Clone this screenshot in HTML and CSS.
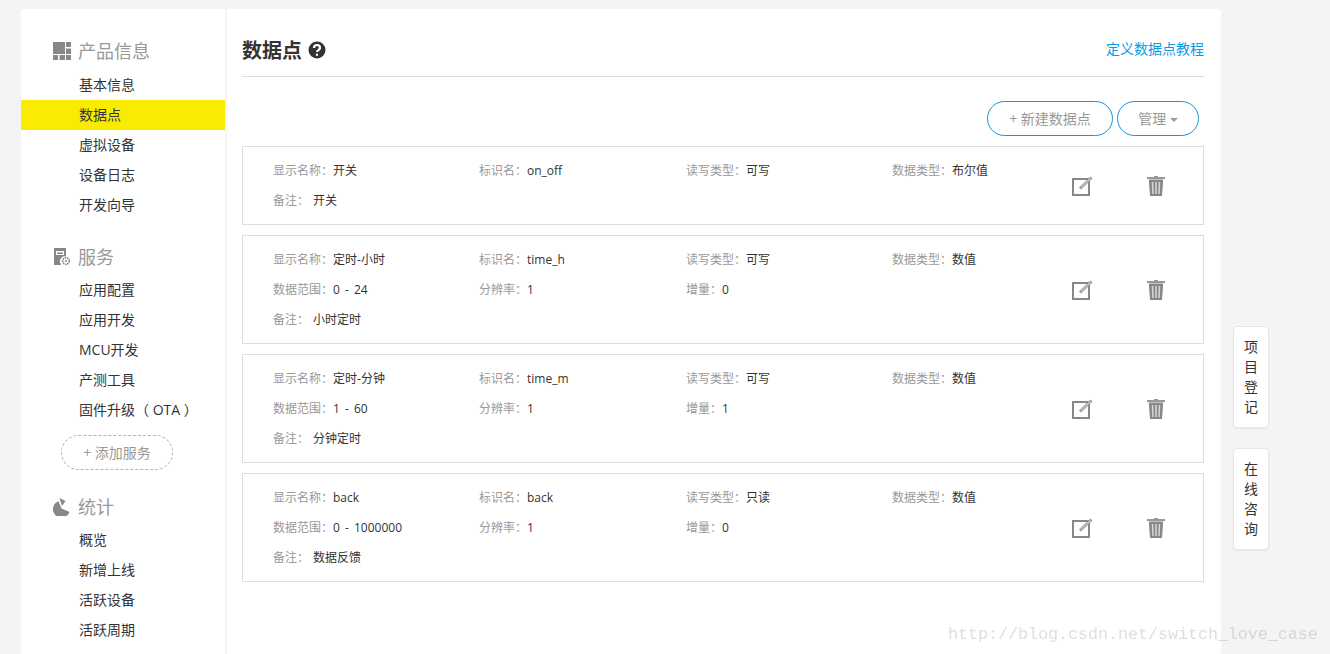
FILE: index.html
```html
<!DOCTYPE html>
<html lang="zh-CN">
<head>
<meta charset="utf-8">
<title>数据点</title>
<link rel="stylesheet" href="styles.css">
</head>
<body>
<svg class="sprites" aria-hidden="true">
  <symbol id="i-edit" viewBox="0 0 21 21">
    <rect class="edit-box" x="1" y="3" width="16" height="16"/>
    <path class="edit-pen" d="M8 12.500 19.500 1.500"/>
    <path class="edit-pen-core" d="M9 11.500 18.500 2.500"/>
  </symbol>
  <symbol id="i-trash" viewBox="0 0 18 20">
    <path class="trash-lid" d="M7 0h4v1h7v2H0V1h7z"/>
    <path class="trash-body" d="M1.800 3.500h14.400L15 20H3z"/>
    <path class="trash-lines" d="M5.500 6l.5 12M9 6v12M12.500 6l-.5 12"/>
  </symbol>
</svg>
<div class="panel">
  <aside class="sidebar">
    <h3 class="nav-title nav-title-first">
      <svg class="nav-icon" viewBox="0 0 18 18"><path d="M0 0h12v12H0zM13 0h5v5h-5zM13 6.500h5V12h-5zM0 13h5v5H0zM6.500 13H12v5H6.500zM13 13h5v5h-5z"/></svg>
      产品信息
    </h3>
    <ul class="nav-list">
      <li>基本信息</li>
      <li class="active">数据点</li>
      <li>虚拟设备</li>
      <li>设备日志</li>
      <li>开发向导</li>
    </ul>
    <h3 class="nav-title">
      <svg class="nav-icon" viewBox="0 0 18 18"><path fill-rule="evenodd" d="M1 0h12v8.500a5 5 0 0 0-5 8V17H1zM3 3v4h8V3zM4 4.500h6V6H4z"/><circle class="gear" cx="13" cy="13" r="3.300"/><circle cx="13" cy="13" r="1"/></svg>
      服务
    </h3>
    <ul class="nav-list">
      <li>应用配置</li>
      <li>应用开发</li>
      <li>MCU开发</li>
      <li>产测工具</li>
      <li>固件升级<i class="punct">（</i> OTA <i class="punct">）</i></li>
    </ul>
    <button class="add-service" type="button">+ 添加服务</button>
    <h3 class="nav-title">
      <svg class="nav-icon" viewBox="0 0 18 18"><path d="M5.500 3.200 8.500 10.500l8 3.500A8.500 8.500 0 1 1 5.500 3.200zM6.500 0l6 3-3.500 5z"/></svg>
      统计
    </h3>
    <ul class="nav-list">
      <li>概览</li>
      <li>新增上线</li>
      <li>活跃设备</li>
      <li>活跃周期</li>
    </ul>
  </aside>
  <main class="main">
    <header class="page-head">
      <h1 class="page-title">数据点
        <svg class="help" viewBox="0 0 18 18"><circle cx="9" cy="9" r="8.500"/><path class="help-mark" d="M6 7a3 3 0 0 1 6 0c0 2-3 2.200-3 4"/><circle class="help-dot" cx="9" cy="13.700" r="1.200"/></svg>
      </h1>
      <a class="guide-link" href="#">定义数据点教程</a>
    </header>
    <div class="toolbar">
      <button class="pill pill-new" type="button">+ 新建数据点</button>
      <button class="pill pill-manage" type="button">管理 <span class="caret"></span></button>
    </div>

    <section class="card">
      <div class="fields">
        <div><span>显示名称<i class="punct">：</i></span>开关</div>
        <div><span>标识名<i class="punct">：</i></span>on_off</div>
        <div><span>读写类型<i class="punct">：</i></span>可写</div>
        <div><span>数据类型<i class="punct">：</i></span>布尔值</div>
        <div class="note"><span>备注<i class="punct">：</i></span>开关</div>
      </div>
      <div class="action"><svg class="icon-edit"><use href="#i-edit"/></svg></div>
      <div class="action"><svg class="icon-trash"><use href="#i-trash"/></svg></div>
    </section>

    <section class="card">
      <div class="fields">
        <div><span>显示名称<i class="punct">：</i></span>定时-小时</div>
        <div><span>标识名<i class="punct">：</i></span>time_h</div>
        <div><span>读写类型<i class="punct">：</i></span>可写</div>
        <div><span>数据类型<i class="punct">：</i></span>数值</div>
        <div><span>数据范围<i class="punct">：</i></span>0 - 24</div>
        <div><span>分辨率<i class="punct">：</i></span>1</div>
        <div class="wide"><span>增量<i class="punct">：</i></span>0</div>
        <div class="note"><span>备注<i class="punct">：</i></span>小时定时</div>
      </div>
      <div class="action"><svg class="icon-edit"><use href="#i-edit"/></svg></div>
      <div class="action"><svg class="icon-trash"><use href="#i-trash"/></svg></div>
    </section>

    <section class="card">
      <div class="fields">
        <div><span>显示名称<i class="punct">：</i></span>定时-分钟</div>
        <div><span>标识名<i class="punct">：</i></span>time_m</div>
        <div><span>读写类型<i class="punct">：</i></span>可写</div>
        <div><span>数据类型<i class="punct">：</i></span>数值</div>
        <div><span>数据范围<i class="punct">：</i></span>1 - 60</div>
        <div><span>分辨率<i class="punct">：</i></span>1</div>
        <div class="wide"><span>增量<i class="punct">：</i></span>1</div>
        <div class="note"><span>备注<i class="punct">：</i></span>分钟定时</div>
      </div>
      <div class="action"><svg class="icon-edit"><use href="#i-edit"/></svg></div>
      <div class="action"><svg class="icon-trash"><use href="#i-trash"/></svg></div>
    </section>

    <section class="card">
      <div class="fields">
        <div><span>显示名称<i class="punct">：</i></span>back</div>
        <div><span>标识名<i class="punct">：</i></span>back</div>
        <div><span>读写类型<i class="punct">：</i></span>只读</div>
        <div><span>数据类型<i class="punct">：</i></span>数值</div>
        <div><span>数据范围<i class="punct">：</i></span>0 - 1000000</div>
        <div><span>分辨率<i class="punct">：</i></span>1</div>
        <div class="wide"><span>增量<i class="punct">：</i></span>0</div>
        <div class="note"><span>备注<i class="punct">：</i></span>数据反馈</div>
      </div>
      <div class="action"><svg class="icon-edit"><use href="#i-edit"/></svg></div>
      <div class="action"><svg class="icon-trash"><use href="#i-trash"/></svg></div>
    </section>
  </main>
</div>
<div class="rail">
  <button class="rail-btn" type="button">项目登记</button>
  <button class="rail-btn" type="button">在线咨询</button>
</div>
<div class="watermark">http://blog.csdn.net/switch_love_case</div>
</body>
</html>
```
FILE: styles.css
```css
* { box-sizing: border-box; }
html, body { height: 100%; overflow: hidden; }
body {
  margin: 0;
  background: #f4f4f4;
  display: flex;
  align-items: flex-start;
  font-family: "Open Sans", "Noto Sans CJK SC", sans-serif;
  color: #333;
}
button { font-family: inherit; background: none; padding: 0; }
.sprites { display: none; }
.punct { font-family: "Noto Sans CJK TC", sans-serif; font-style: normal; line-height: 0; }

.panel {
  width: 1200px;
  height: 645px;
  margin: 9px 0 0 21px;
  flex: none;
  display: flex;
  background: #fff;
  border-radius: 4px 4px 0 0;
}

.sidebar {
  width: 206px;
  flex: none;
  padding-top: 25px;
  border-right: 2px solid #f4f4f4;
}
.nav-title {
  display: flex;
  align-items: center;
  height: 34px;
  margin: 20px 0 1px;
  padding: 0 0 2px 32px;
  font-size: 18px;
  font-weight: 400;
  color: #999;
}
.nav-title-first { margin: 0 0 2px; }
.nav-icon { width: 18px; height: 18px; margin: 2px 7px 0 0; fill: #888; flex: none; }
.gear { fill: #fff; stroke: #888; stroke-width: 1.700; stroke-dasharray: 1.500 .8; }
.nav-list { list-style: none; margin: 0; padding: 0; }
.nav-list li {
  height: 30px;
  line-height: 30px;
  padding-left: 58px;
  font-size: 14px;
  color: #333;
}
.nav-list .active { background: #faec00; }
.add-service {
  display: block;
  width: 112px;
  height: 35px;
  margin: 10px 0 0 40px;
  padding-bottom: 2px;
  border: 1px dashed #b5b5b5;
  border-radius: 18px;
  font-size: 14px;
  color: #999;
}

.main { flex: 1; padding: 25px 17px 0 15px; }
.page-head {
  display: flex;
  justify-content: space-between;
  align-items: center;
  height: 43px;
  padding-bottom: 11px;
  border-bottom: 1px solid #ddd;
}
.page-title {
  display: flex;
  align-items: center;
  gap: 6px;
  margin: 0;
  font-size: 20px;
  font-weight: 700;
  color: #333;
}
.help { width: 18px; height: 18px; fill: #333; }
.help-mark { fill: none; stroke: #fff; stroke-width: 2.200; }
.help-dot { fill: #fff; }
.guide-link {
  font-size: 14px;
  color: #0a9be5;
  text-decoration: none;
  margin-bottom: 4px;
}

.toolbar {
  display: flex;
  justify-content: flex-end;
  gap: 4px;
  margin: 24px 0 10px;
  padding-right: 5px;
}
.pill {
  height: 35px;
  padding-bottom: 2px;
  border: 1px solid #1a93db;
  border-radius: 18px;
  font-size: 14px;
  color: #999;
}
.pill-new { width: 126px; }
.pill-manage { width: 82px; }
.caret {
  display: inline-block;
  vertical-align: middle;
  border: 4px solid transparent;
  border-top-color: #999;
  border-bottom: 0;
}

.card {
  display: flex;
  align-items: center;
  padding: 9px 9px 8px 30px;
  margin-bottom: 10px;
  border: 1px solid #ddd;
}
.fields {
  display: grid;
  grid-template-columns: 206px 207px 206px 152px;
  grid-auto-rows: 30px;
  width: 771px;
  flex: none;
  font-size: 12px;
  line-height: 30px;
  word-spacing: 2px;
  color: #333;
}
.fields span { color: #999; }
.note { grid-column: 1 / -1; }
.note span { margin-right: 4px; }
.action { width: 75px; flex: none; display: flex; justify-content: center; }
.icon-edit { width: 21px; height: 21px; margin-left: 1px; display: block; }
.edit-box { fill: none; stroke: #888; stroke-width: 2; }
.edit-pen { fill: none; stroke: #999; stroke-width: 3; }
.edit-pen-core { fill: none; stroke: #e4e4e4; stroke-width: 1; }
.icon-trash { width: 18px; height: 20px; margin-right: 1px; display: block; }
.trash-lid { fill: #999; }
.trash-body { fill: #888; }
.trash-lines { fill: none; stroke: #d8d8d8; stroke-width: 1.500; }

.rail {
  display: flex;
  flex-direction: column;
  gap: 20px;
  margin: 326px 0 0 12px;
}
.rail-btn {
  width: 36px;
  height: 102px;
  padding: 10px;
  background: #fff;
  border: 1px solid #e6e6e6;
  border-radius: 4px;
  box-shadow: 0 1px 2px rgba(0, 0, 0, .06);
  font-size: 14px;
  line-height: 20px;
  color: #333;
  word-break: break-all;
}

.watermark {
  position: absolute;
  left: 948px;
  top: 624px;
  font-family: "Liberation Mono", monospace;
  font-size: 16.670px;
  line-height: 22px;
  color: rgba(150, 150, 140, .32);
  white-space: nowrap;
}
```
